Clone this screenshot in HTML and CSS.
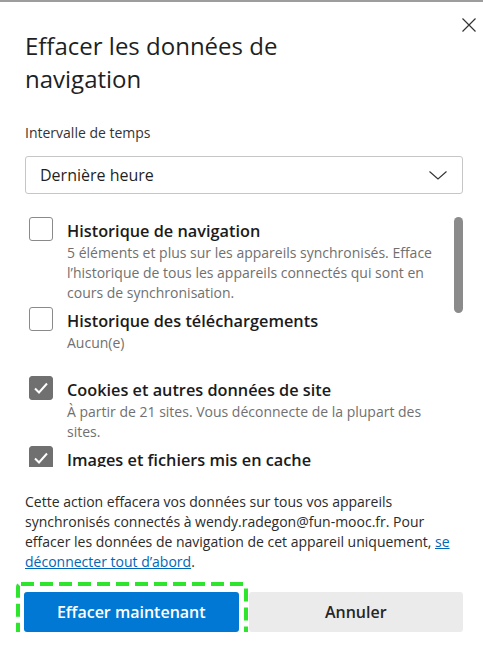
FILE: index.html
```html
<!DOCTYPE html>
<html lang="fr">
<head>
    <meta charset="UTF-8">
    <meta name="viewport" content="width=device-width, initial-scale=1.0">
    <title>Effacer les données de navigation</title>
    <link rel="stylesheet" href="styles.css">
</head>
<body>
    <div class="dialog">
        <div class="head">
            <h1 class="title">Effacer les données de navigation</h1>
            <button class="close" aria-label="Fermer">
                <svg width="14" height="14" viewBox="0 0 14 14"><path d="M0.5 0.5 L13.5 13.5 M13.5 0.5 L0.5 13.5" stroke="#333" stroke-width="1.2" fill="none"/></svg>
            </button>
        </div>

        <label class="field-label">Intervalle de temps</label>
        <div class="select">
            <span>Dernière heure</span>
            <svg width="18" height="9" viewBox="0 0 18 9"><path d="M0.5 0.5 L9 8 L17.5 0.5" stroke="#333" stroke-width="1.1" fill="none"/></svg>
        </div>

        <!-- data types -->
        <div class="list">
            <div class="items">
                <div class="item">
                    <span class="box"></span>
                    <div class="text">
                        <div class="name">Historique de navigation</div>
                        <div class="desc">5 éléments et plus sur les appareils synchronisés. Efface l’historique de tous les appareils connectés qui sont en cours de synchronisation.</div>
                    </div>
                </div>
                <div class="item spaced">
                    <span class="box"></span>
                    <div class="text">
                        <div class="name">Historique des téléchargements</div>
                        <div class="desc">Aucun(e)</div>
                    </div>
                </div>
                <div class="item">
                    <span class="box checked">
                        <svg width="24" height="24" viewBox="0 0 24 24"><path d="M6 12.5 L10 16.5 L18 7.5" stroke="#fff" stroke-width="2" fill="none"/></svg>
                    </span>
                    <div class="text">
                        <div class="name">Cookies et autres données de site</div>
                        <div class="desc">À partir de 21 sites. Vous déconnecte de la plupart des sites.</div>
                    </div>
                </div>
                <div class="item">
                    <span class="box checked">
                        <svg width="24" height="24" viewBox="0 0 24 24"><path d="M6 12.5 L10 16.5 L18 7.5" stroke="#fff" stroke-width="2" fill="none"/></svg>
                    </span>
                    <div class="text">
                        <div class="name">Images et fichiers mis en cache</div>
                    </div>
                </div>
            </div>
            <div class="track"><div class="thumb"></div></div>
        </div>

        <p class="note">Cette action effacera vos données sur tous vos appareils synchronisés connectés à wendy.radegon@fun-mooc.fr. Pour effacer les données de navigation de cet appareil uniquement, <a href="#">se déconnecter tout d’abord</a>.</p>

        <div class="actions">
            <div class="primary-wrap">
                <button class="btn primary">Effacer maintenant</button>
                <svg class="focus-ring" width="232" height="62" viewBox="0 0 232 62"><rect x="2" y="2" width="228" height="58" rx="3" fill="none" stroke="#2ee52e" stroke-width="4" stroke-dasharray="13 6"/></svg>
            </div>
            <button class="btn secondary">Annuler</button>
        </div>
    </div>
</body>
</html>
```

FILE: styles.css
```css
body {
    margin: 0;
    padding: 0;
    background-color: #fff;
    border-top: 2px solid #9d9d9d;
    font-family: 'Open Sans', 'Noto Sans', sans-serif;
    color: #262626;
}

.dialog {
    padding: 0 20px 0 25px;
}

.head {
    display: flex;
    justify-content: space-between;
    align-items: flex-start;
}

.title {
    margin: 27px 0 0;
    max-width: 300px;
    font-size: 24px;
    line-height: 33px;
    font-weight: 400;
    color: #1f1f1f;
}

.close {
    margin: 11px -18px 0 0;
    width: 24px;
    height: 24px;
    padding: 0;
    border: none;
    background: none;
    display: flex;
    align-items: center;
    justify-content: center;
}

.field-label {
    display: block;
    margin-top: 28px;
    font-size: 14px;
    line-height: 20px;
    color: #333;
}

.select {
    margin-top: 13px;
    height: 38px;
    box-sizing: border-box;
    border: 1px solid #c6c6c6;
    border-radius: 3px;
    display: flex;
    align-items: center;
    justify-content: space-between;
    padding: 0 15px 0 14px;
    font-size: 16px;
    color: #1f1f1f;
}

.list {
    margin-top: 12px;
    height: 261px;
    display: flex;
    overflow: hidden;
}

.items {
    flex: 1;
    min-width: 0;
    padding: 13px 8px 0 4px;
}

.item {
    display: flex;
    gap: 14px;
    margin-bottom: 6px;
}

.item.spaced {
    margin-bottom: 25px;
}

.box {
    flex-shrink: 0;
    width: 24px;
    height: 24px;
    box-sizing: border-box;
    margin-top: -2px;
    border: 1px solid #8a8a8a;
    border-radius: 3px;
}

.box.checked {
    background-color: #707070;
    border-color: #707070;
}

.box.checked svg {
    display: block;
    margin: -1px;
}

.name {
    font-size: 16.3px;
    line-height: 24px;
    font-weight: 600;
    color: #1b1b1b;
}

.desc {
    font-size: 14px;
    line-height: 20px;
    color: #707070;
}

.track {
    width: 9px;
    flex-shrink: 0;
}

.thumb {
    margin-top: 11px;
    height: 96px;
    border-radius: 5px;
    background-color: #8b8b8b;
}

.note {
    margin: 25px 0 0;
    font-size: 14px;
    line-height: 20px;
    color: #2b2b2b;
}

.note a {
    color: #0067b8;
    text-decoration: underline;
}

.actions {
    margin: 20px 0 0 -1px;
    display: grid;
    grid-template-columns: minmax(0, 1fr) minmax(0, 1fr);
    gap: 10px;
}

.primary-wrap {
    position: relative;
}

.btn {
    width: 100%;
    height: 40px;
    padding: 0;
    border: none;
    border-radius: 3px;
    font-family: 'Open Sans', 'Noto Sans', sans-serif;
    font-size: 16px;
    font-weight: 600;
    cursor: pointer;
}

.primary {
    display: block;
    background-color: #0078d4;
    color: #fff;
}

.secondary {
    background-color: #ebebeb;
    color: #262626;
}

/* dashed highlight drawn over the primary button */
.focus-ring {
    position: absolute;
    left: -8px;
    top: -10px;
    pointer-events: none;
}
```
